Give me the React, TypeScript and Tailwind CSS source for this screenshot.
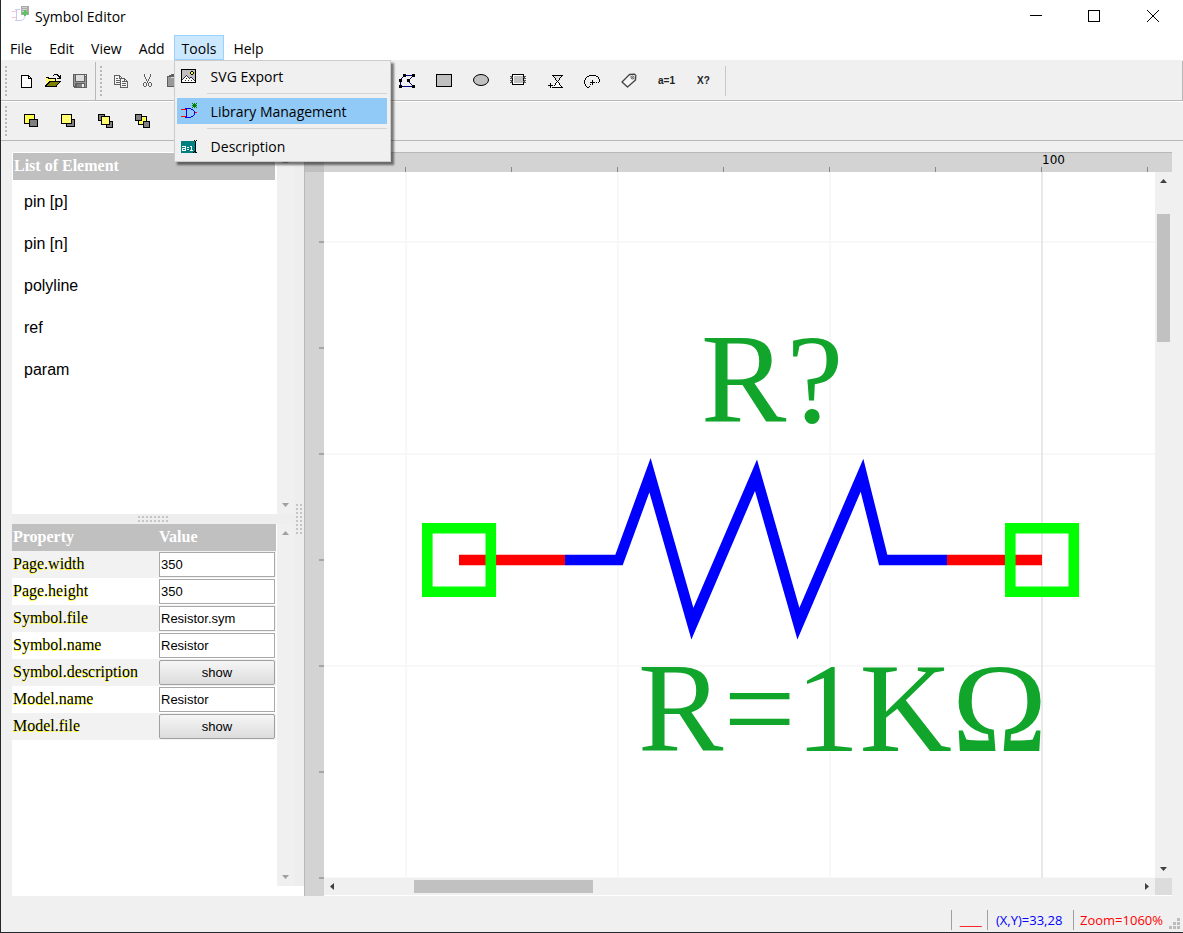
import { useState } from "react";
import type { ReactNode } from "react";
import clsx from "clsx";

const menus = ["File", "Edit", "View", "Add", "Tools", "Help"];
const elements = ["pin [p]", "pin [n]", "polyline", "ref", "param"];

const properties = [
  { name: "Page.width", value: "350" },
  { name: "Page.height", value: "350" },
  { name: "Symbol.file", value: "Resistor.sym" },
  { name: "Symbol.name", value: "Resistor" },
  { name: "Symbol.description", action: "show" },
  { name: "Model.name", value: "Resistor" },
  { name: "Model.file", action: "show" },
];

function Icon({ children, smooth }: { children: ReactNode; smooth?: boolean }) {
  return (
    <svg
      width="16"
      height="16"
      viewBox="0 0 16 16"
      fill="none"
      className="shrink-0"
      shapeRendering={smooth ? "auto" : "crispEdges"}
      aria-hidden="true"
    >
      {children}
    </svg>
  );
}

// filled box with a one pixel black outline
function Box({ x, y, w, h, fill }: { x: number; y: number; w: number; h: number; fill: string }) {
  return (
    <>
      <rect x={x} y={y} width={w} height={h} fill="#000" />
      <rect x={x + 1} y={y + 1} width={w - 2} height={h - 2} fill={fill} />
    </>
  );
}

const NewIcon = () => (
  <Icon>
    <path d="M3 2h8v1h1v1h1v1h1v10H3z" fill="#000" />
    <path d="M4 3h6v3h3v8H4z" fill="#fff" />
    <path d="M11 4h1v1h-1z" fill="#fff" />
  </Icon>
);

const OpenIcon = () => (
  <Icon>
    <path d="M1 4h3v1h7v3h-1v6H1z" fill="#000" />
    <path d="M1 5h2v1h7v2H5v1H4v1H3v1H2v1H1z" fill="#ffff70" />
    <path d="M4 8h12v1h-1v1h-1v1h-1v1h-1v2H0v-2h1v-1h1v-1h1V9h1z" fill="#000" />
    <path d="M5 9h9v1h-1v1h-1v1h-1v1H2v-1h1v-1h1v-1h1z" fill="#808000" />
    <path d="M8 2h1V1h4v1h1v1h1V2h1v4h-4V5h2V4h-1V3h-1V2H9v1H8z" fill="#000" />
  </Icon>
);

const SaveIcon = () => (
  <Icon>
    <path d="M1 1h14v14H2v-1H1z" fill="#606060" />
    <path d="M2 2h1v11H2zM13 4h1v10h-1zM3 9h10v1H3z" fill="#999" />
    <path d="M4 2h8v6H4z" fill="#dedede" />
    <path d="M13 2h1v1h-1z" fill="#eee" />
    <path d="M5 11h7v3H5z" fill="#808080" />
    <path d="M10 11h2v3h-2z" fill="#f0f0f0" />
  </Icon>
);

const CopyIcon = () => (
  <Icon>
    <path d="M1.500 2.500h5l3 3v6h-8z" fill="#f4f4f4" stroke="#606060" />
    <path d="M6.500 3v3M3 5.500h2M3 7.500h4M3 9.500h4" stroke="#606060" />
    <path d="M7.500 5.500h4l3 3v6h-7z" fill="#f4f4f4" stroke="#606060" />
    <path d="M11.500 6v2.500h3M9 8.500h2M9 10.500h4M9 12.500h4" stroke="#606060" />
  </Icon>
);

const CutIcon = () => (
  <Icon>
    <path d="M4 1h1v3h1v2h1v2h1v2H7V8H6V6H5V4H4zM10 1h1v3h-1v2H9v2H8v2H7V8h1V6h1V4h1z" fill="#606060" />
    <path
      d="M4 9h2v1h1v3H6v1H4v-1H3v-3h1zM4 10v3h2v-3zM9 9h2v1h1v3h-1v1H9v-1H8v-3h1zM9 10v3h2v-3z"
      fill="#606060"
      fillRule="evenodd"
    />
  </Icon>
);

const PasteIcon = () => (
  <Icon>
    <path d="M0 3h2V2h2V1h3v1h2v1h3v11H0z" fill="#606060" />
    <path d="M1 4h10v9H1z" fill="#999" />
    <path d="M4 4h5v1H4z" fill="#ddd" />
  </Icon>
);

const PolylineIcon = () => (
  <svg width="17" height="16" viewBox="1 0 17 16" className="shrink-0" shapeRendering="crispEdges" aria-hidden="true">
    <path d="M2 6h1v7H2zM3 5h1v1H3zM4 4h1v1H4zM6 2h9v1H6zM2 13h13v1H2z" fill="#00007f" />
    <path d="M14 3h1v1h-1zM13 4h1v1h-1zM12 5h1v1h-1zM11 6h1v1h-1zM11 9h1v1h-1zM12 10h1v1h-1zM13 11h1v1h-1z" fill="#00007f" />
    <path d="M1 12h3v3H1zM1 6h3v3H1zM5 1h3v3H5zM14 1h3v3h-3zM9 6h3v3H9zM14 12h3v3h-3z" fill="#000" />
  </svg>
);

const RectIcon = () => (
  <Icon>
    <Box x={0} y={1} w={16} h={13} fill="#c0c0c0" />
  </Icon>
);

const EllipseIcon = () => (
  <Icon smooth>
    <ellipse cx="8" cy="7" rx="7.500" ry="5.500" fill="#c0c0c0" stroke="#000" />
  </Icon>
);

const ChipIcon = () => (
  <Icon>
    <path d="M2 1h12v11H2z" fill="#000" />
    <path d="M3 2h10v9H3z" fill="#fff" />
    <path d="M4 3h9v7H4z" fill="#c0c0c0" />
    <path d="M2 4h1v1H2zM2 8h1v1H2zM13 4h1v1h-1zM13 8h1v1h-1z" fill="#f0f0f0" />
    <path
      d="M0 3h2v1h1v1H2v1H0V5h1V4H0zM0 7h2v1h1v1H2v1H0V9h1V8H0zM16 3h-2v1h-1v1h1v1h2V5h-1V4h1zM16 7h-2v1h-1v1h1v1h2V9h-1V8h1z"
      fill="#555"
    />
  </Icon>
);

const HourglassIcon = () => (
  <Icon>
    <path d="M6 3h8v1h-1v1h-1v1h-1v1H9V6H8V5H7V4H6z" fill="#e0e0e0" />
    <path d="M10 9h1v1h1v2h1v1h1v1H6v-1h1v-1h1v-2h1z" fill="#fff" />
    <path
      d="M5 2h11v1H5zM6 3h1v1H6zM14 3h1v1h-1zM7 4h1v1H7zM13 4h1v1h-1zM8 5h1v2H8zM12 5h1v2h-1zM9 7h1v1H9zM11 7h1v1h-1zM10 8h1v1h-1zM9 9h1v1H9zM11 9h1v1h-1zM8 10h1v2H8zM12 10h1v2h-1zM7 12h1v1H7zM13 12h1v1h-1zM14 13h1v1h-1zM5 14h11v1H5z"
      fill="#000"
    />
    <path d="M1 12h5v1H1zM3 10h1v5H3z" fill="#000" />
  </Icon>
);

const ArcIcon = () => (
  <Icon>
    <path
      d="M5 2h7v1H5zM3 3h2v1H3zM12 3h2v1h-2zM2 4h1v1H2zM14 4h1v2h-1zM1 5h1v2H1zM0 7h1v4H0zM15 6h1v3h-1zM1 11h1v2H1zM2 13h1v1H2zM3 14h2v1H3z"
      fill="#000"
    />
    <path d="M6 9h5v1H6zM8 7h1v5H8zM12 9h1v1h-1zM14 9h1v1h-1zM6 11h1v1H6zM5 13h1v1H5z" fill="#000" />
  </Icon>
);

const TagIcon = () => (
  <Icon smooth>
    <path d="M1 9 8.500 1.500l5-.3 1.300 1.300-.3 4.500L6.500 14z" fill="#f6f6f6" stroke="#444" strokeWidth="1.300" strokeLinejoin="round" />
    <circle cx="11.500" cy="4.500" r="1.500" stroke="#555" />
    <path d="M9.500 3l4 3" stroke="#777" />
  </Icon>
);

const FrontIcon = () => (
  <Icon>
    <Box x={1} y={1} w={11} h={10} fill="#ffff50" />
    <Box x={6} y={6} w={9} h={8} fill="#808080" />
  </Icon>
);

const BackIcon = () => (
  <Icon>
    <Box x={6} y={6} w={9} h={8} fill="#808080" />
    <Box x={1} y={1} w={11} h={10} fill="#ffff70" />
  </Icon>
);

const ForwardIcon = () => (
  <Icon>
    <Box x={1} y={1} w={7} h={7} fill="#808080" />
    <Box x={9} y={8} w={7} h={7} fill="#808080" />
    <Box x={4} y={3} w={9} h={9} fill="#ffff70" />
  </Icon>
);

const BackwardIcon = () => (
  <Icon>
    <Box x={4} y={3} w={9} h={9} fill="#ffff50" />
    <Box x={1} y={1} w={7} h={7} fill="#808080" />
    <Box x={9} y={8} w={7} h={7} fill="#808080" />
  </Icon>
);

const PictureIcon = () => (
  <Icon>
    <Box x={0} y={1} w={15} h={14} fill="#c0c0c0" />
    <path d="M10 3h2v1h1v2h-1v1h-2V6H9V4h1z" fill="#000" />
    <path d="M10 4h2v2h-2z" fill="#ff0" />
    <path d="M1 12h1v-1h1v-1h1V9h1V8h1v1h1v1h1v1h1v-1h2v1h1v1h2v2H1z" fill="#fff" />
    <path
      d="M5 7h1v1H5zM4 8h1v1H4zM6 8h1v1H6zM3 9h1v1H3zM7 9h1v1H7zM2 10h1v1H2zM8 10h1v1H8zM1 11h1v1H1zM9 9h2v1H9zM11 10h1v1h-1zM12 11h1v1h-1zM13 12h1v1h-1zM5 10h1v1H5zM4 12h1v1H4zM7 12h1v1H7zM10 12h1v1h-1z"
      fill="#333"
    />
  </Icon>
);

const GateIcon = () => (
  <Icon>
    <path d="M0 6h5v1H0zM0 13h5v1H0zM13 9h3v1h-3z" fill="#f00" />
    <path d="M4 5h6v1h2v1h1v1h1v4h-1v1h-1v1h-2v1H4v-1h1V6H4zM6 6v8h4v-1h2v-1h1V8h-1V7h-2V6z" fill="#00f" fillRule="evenodd" />
    <path d="M11 0h1v1h1V0h1v1h1V0h1v1h-1v1h1v1h-1v1h1v1h-1V4h-1v1h-1V4h-1v1h-1V4h1V3h-1V2h1V1h-1z" fill="#008000" />
  </Icon>
);

const DescriptionIcon = () => (
  <Icon>
    <path d="M0 3h14v12H0z" fill="#008080" />
    <path d="M1 8h4v5H1v-3h3V9H1zM2 11v1h2v-1zM6 9h2v1H6zM6 11h2v1H6zM9 8h2v4h1v1H9v-1h1V9H9z" fill="#fff" fillRule="evenodd" />
    <path d="M12 2h1v1h1v10h-1v1h-1v1h1v-1h1v1h2v-1h-1V3h1V2h-1v1h-1V2z" fill="#000" />
  </Icon>
);

const AppIcon = () => (
  <svg width="18" height="18" viewBox="0 0 18 18" fill="none" className="shrink-0" aria-hidden="true">
    <path d="M1 5.500h4M1 11.500h4" stroke="#f8c4c4" />
    <path d="M4 3.500h5M4 14.500h5c3 0 5-2 5-5M5.500 4v10" stroke="#c8c8f4" />
    <path d="M10 0h8v9h-8z" fill="#a9aaa9" />
    <path d="M11 1.500h5M11 3.500h5M11 5.500h2" stroke="#d0d0d0" />
    <path d="M13 4h2v2h2v2h-2v2h-2V8h-2V6h2z" fill="#5cc45c" />
  </svg>
);

function Tool({ label, wide, children }: { label: string; wide?: boolean; children: ReactNode }) {
  return (
    <button
      type="button"
      aria-label={label}
      className={clsx("flex h-7 shrink-0 items-center hover:bg-[#cce8ff]", wide ? "w-[37px] pl-[10px]" : "w-[27px] pl-[5px]")}
    >
      {children}
    </button>
  );
}

function Handle() {
  return (
    <div className="ml-1 flex shrink-0 flex-col gap-[2px]">
      {Array.from({ length: 8 }, (_, i) => (
        <span key={i} className="size-[2px] bg-[#b8b8b8]" />
      ))}
    </div>
  );
}

function Arrow({ dir, dim }: { dir: "up" | "down" | "left" | "right"; dim?: boolean }) {
  const paths = {
    up: "M1 6h7L4.500 2z",
    down: "M1 3h7L4.500 7z",
    left: "M6 1v7L2 4.500z",
    right: "M3 1v7l4-3.500z",
  };
  return (
    <svg width="9" height="9" viewBox="0 0 9 9" className="shrink-0" aria-hidden="true">
      <path d={paths[dir]} fill={dim ? "#a0a0a0" : "#404040"} />
    </svg>
  );
}

function Grip({ vertical }: { vertical?: boolean }) {
  return (
    <div className={clsx("grid gap-[2px]", vertical ? "grid-cols-2" : "grid-cols-8")}>
      {Array.from({ length: 16 }, (_, i) => (
        <span key={i} className="size-[2px] bg-[#c4c4c4]" />
      ))}
    </div>
  );
}

function PaneScrollbar() {
  return (
    <div className="flex w-[17px] shrink-0 flex-col items-center justify-between bg-[#f0f0f0] py-[5px]">
      <Arrow dir="up" dim />
      <Arrow dir="down" dim />
    </div>
  );
}

function ToolsMenu() {
  const items = [
    { label: "SVG Export", icon: <PictureIcon /> },
    { label: "Library Management", icon: <GateIcon />, active: true },
    { label: "Description", icon: <DescriptionIcon /> },
  ];
  return (
    <div
      role="menu"
      className="absolute top-full left-0 z-10 w-[217px] border border-[#ccc] bg-[#f0f0f0] py-[2px] pr-[3px] pl-[2px] shadow-[3px_3px_2px_rgba(0,0,0,0.5)]"
    >
      {items.map((item, i) => (
        <div key={item.label}>
          {i > 0 && <div className="my-1 ml-[30px] h-px bg-[#d4d4d4]" />}
          <button
            type="button"
            role="menuitem"
            className={clsx("flex h-[26px] w-full items-center gap-[14px] pl-1 text-left", item.active && "bg-[#91c9f7]")}
          >
            {item.icon}
            <span className="pt-[2px]">{item.label}</span>
          </button>
        </div>
      ))}
    </div>
  );
}

function ElementList() {
  return (
    <section className="flex h-[362px] shrink-0">
      <div className="min-w-0 flex-1 bg-white">
        <h2 className="mt-px mr-[2px] ml-px h-[27px] bg-[#c0c0c0] pl-px font-['Liberation_Serif',serif] text-base leading-[26px] font-bold text-white">
          List of Element
        </h2>
        <ul className="pt-px font-['Liberation_Sans',sans-serif] text-base">
          {elements.map((el) => (
            <li key={el}>
              <button type="button" className="h-[42px] w-full pl-3 text-left">
                {el}
              </button>
            </li>
          ))}
        </ul>
      </div>
      <PaneScrollbar />
    </section>
  );
}

function PropertyTable() {
  return (
    <section className="flex min-h-0 flex-1">
      <div className="min-w-0 flex-1 overflow-hidden bg-white pr-px">
        <table className="w-full table-fixed border-collapse font-['Liberation_Serif',serif] text-base">
          <thead>
            <tr className="h-[27px] bg-[#c0c0c0] text-left text-white">
              <th className="w-[147px] p-0 pb-px pl-px leading-6">Property</th>
              <th className="p-0 pb-px leading-6">Value</th>
            </tr>
          </thead>
          <tbody>
            {properties.map((prop) => (
              <tr key={prop.name} className="h-[27px] odd:bg-[#f2f2f2]">
                <td className="p-0 pb-px pl-px leading-6 [text-shadow:0_1px_0_#ff0]">
                  <label htmlFor={prop.name}>{prop.name}</label>
                </td>
                <td className="py-px pr-px pl-0">
                  {prop.action ? (
                    <button
                      id={prop.name}
                      type="button"
                      className="block h-[25px] w-full rounded-[2px] border border-[#a0a0a0] bg-linear-to-b from-[#f6f6f6] to-[#dcdcdc] font-['Liberation_Sans',sans-serif] text-[13px]"
                    >
                      {prop.action}
                    </button>
                  ) : (
                    <input
                      id={prop.name}
                      type="text"
                      defaultValue={prop.value}
                      className="block h-[25px] w-full border border-[#a9a9a9] bg-white px-px font-['Liberation_Sans',sans-serif] text-[13px]"
                    />
                  )}
                </td>
              </tr>
            ))}
          </tbody>
        </table>
      </div>
      <PaneScrollbar />
    </section>
  );
}

function Drawing() {
  return (
    <svg className="block h-full w-full bg-white" role="img" aria-label="Resistor symbol">
      <g stroke="#f8f8f8" strokeWidth="2">
        {[82, 294, 506].map((x) => (
          <line key={x} x1={x} x2={x} y1="0" y2="100%" />
        ))}
        {[70, 282, 494, 706].map((y) => (
          <line key={y} x1="0" x2="100%" y1={y} y2={y} />
        ))}
        <line x1="718" x2="718" y1="0" y2="100%" stroke="#e8e8e8" />
      </g>
      <g fill="none" strokeWidth="10.6">
        <path
          d="M241 388h54l31-84.800 42.400 148.400L432 303.200l42.400 148.400L538 303.200l21.200 84.800H623"
          stroke="#00f"
          strokeMiterlimit="10"
        />
        <path d="M135 388h106M623 388h95" stroke="#f00" />
        <path d="M103.300 356.200h63.500v63.500h-63.500zM686.300 356.200h63.500v63.500h-63.500z" stroke="#0f0" />
      </g>
      <g fill="#11a52b" className="font-['Liberation_Serif',serif] text-[128px]">
        <text x="377" y="250">R?</text>
        <text x="314" y="579">R=1KΩ</text>
      </g>
    </svg>
  );
}

function Editor() {
  return (
    <div className="flex min-w-0 flex-1 border-l border-[#b8b8b8] bg-[#d3d3d3]">
      {/* left ruler */}
      <div className="flex w-[19px] shrink-0 flex-col items-end overflow-hidden">
        <div className="h-5 w-full shrink-0 bg-[#c0c0c0]" />
        <div className="h-[71px] w-[5px] shrink-0 border-b-2 border-[#a6a6a6]" />
        {Array.from({ length: 6 }, (_, i) => (
          <div key={i} className="h-[106px] w-[5px] shrink-0 border-b-2 border-[#a6a6a6]" />
        ))}
      </div>
      <div className="flex min-w-0 flex-1 flex-col">
        {/* top ruler */}
        <div className="flex h-5 shrink-0 items-end overflow-hidden border-t border-[#b8b8b8]">
          <div className="h-[5px] w-[82px] shrink-0 border-r border-[#888]" />
          {Array.from({ length: 8 }, (_, i) => (
            <div key={i} className="flex h-full w-[106px] shrink-0 flex-col justify-between">
              <span className="h-3 font-['DejaVu_Sans',sans-serif] text-xs leading-[14px]">{i === 6 ? "100" : ""}</span>
              <span className="h-[5px] border-r border-[#888]" />
            </div>
          ))}
        </div>
        <div className="flex min-h-0 flex-1">
          <div className="min-w-0 flex-1">
            <Drawing />
          </div>
          <div className="flex w-[17px] shrink-0 flex-col items-center bg-[#f0f0f0] py-[5px]">
            <Arrow dir="up" />
            <div className="mt-7 h-32 w-[13px] bg-[#c1c1c1]" />
            <div className="flex-1" />
            <Arrow dir="down" />
          </div>
        </div>
        <div className="flex h-[18px] shrink-0 border-b border-white bg-[#f0f0f0]">
          <div className="flex flex-1 items-center px-1">
            <Arrow dir="left" />
            <div className="ml-[77px] h-[13px] w-[179px] bg-[#c1c1c1]" />
            <div className="flex-1" />
            <Arrow dir="right" />
          </div>
          <div className="w-[17px] bg-[#dcdcdc]" />
        </div>
      </div>
    </div>
  );
}

export default function App() {
  const [open, setOpen] = useState("Tools");

  return (
    <div className="flex h-screen flex-col overflow-hidden border-b border-l border-[#22282b] bg-[#f0f0f0] font-['Open_Sans','Noto_Sans',sans-serif] text-sm text-black">
      <header className="flex h-[34px] shrink-0 items-center bg-white pl-[10px]">
        <div className="flex flex-1 items-center gap-[6px] pb-1">
          <AppIcon />
          <h1 className="pt-1">Symbol Editor</h1>
        </div>
        <button type="button" aria-label="Minimize" className="flex h-full w-[58px] items-center justify-center">
          <svg width="12" height="12" shapeRendering="crispEdges">
            <path d="M0 4h12v1H0z" />
          </svg>
        </button>
        <button type="button" aria-label="Maximize" className="flex h-full w-[58px] items-center justify-center pb-[2px]">
          <svg width="12" height="12" fill="none" stroke="#000" shapeRendering="crispEdges">
            <path d="M.5.500h11v11H.5z" />
          </svg>
        </button>
        <button type="button" aria-label="Close" className="flex h-full w-[60px] items-center justify-center pb-[2px]">
          <svg width="12" height="12" stroke="#000">
            <path d="M0 0l12 12M12 0L0 12" />
          </svg>
        </button>
      </header>

      <nav className="flex h-[27px] shrink-0 items-end gap-px border-b border-[#f0f0f0] bg-white pl-px">
        {menus.map((menu) => (
          <div key={menu} className="relative">
            <button
              type="button"
              onClick={() => setOpen(open === menu ? "" : menu)}
              className={clsx(
                "h-[25px] border px-[7px] pt-[2px]",
                open === menu ? "border-[#99d1ff] bg-[#cce8ff]" : "border-transparent"
              )}
            >
              {menu}
            </button>
            {menu === "Tools" && open === "Tools" && <ToolsMenu />}
          </div>
        ))}
      </nav>

      <div className="flex h-10 shrink-0 items-center border-r border-b border-[#b8b8b8] pt-px">
        <div className="flex h-full w-[95px] shrink-0 items-center border-r border-[#b8b8b8]">
          <Handle />
          <div className="ml-[6px] flex">
            <Tool label="New"><NewIcon /></Tool>
            <Tool label="Open"><OpenIcon /></Tool>
            <Tool label="Save"><SaveIcon /></Tool>
          </div>
        </div>
        <div className="flex w-[293px] shrink-0 items-center">
          <Handle />
          <div className="ml-[6px] flex">
            <Tool label="Copy"><CopyIcon /></Tool>
            <Tool label="Cut"><CutIcon /></Tool>
            <Tool label="Paste"><PasteIcon /></Tool>
          </div>
        </div>
        <div className="flex h-[30px] items-center border-r border-[#c8c8c8] pr-[3px]">
          <Tool label="Polyline" wide><PolylineIcon /></Tool>
          <Tool label="Rectangle" wide><RectIcon /></Tool>
          <Tool label="Ellipse" wide><EllipseIcon /></Tool>
          <Tool label="Chip" wide><ChipIcon /></Tool>
          <Tool label="Pie" wide><HourglassIcon /></Tool>
          <Tool label="Arc" wide><ArcIcon /></Tool>
          <Tool label="Label" wide><TagIcon /></Tool>
          <Tool label="Parameter" wide>
            <span className="font-['Liberation_Sans',sans-serif] text-[10px] font-bold text-[#222]">a=1</span>
          </Tool>
          <Tool label="Reference" wide>
            <span className="pl-[2px] font-['Liberation_Sans',sans-serif] text-[10px] font-bold text-[#222]">X?</span>
          </Tool>
        </div>
      </div>

      <div className="flex h-10 shrink-0 items-center border-t border-b border-t-white border-b-[#b8b8b8]">
        <Handle />
        <div className="ml-[6px] flex">
          <Tool label="Bring to front" wide><FrontIcon /></Tool>
          <Tool label="Send to back" wide><BackIcon /></Tool>
          <Tool label="Bring forward" wide><ForwardIcon /></Tool>
          <Tool label="Send backward" wide><BackwardIcon /></Tool>
        </div>
      </div>

      <main className="flex min-h-0 flex-1 px-[11px] pt-[11px]">
        <aside className="flex w-[292px] shrink-0 flex-col bg-white pb-[10px]">
          <div className="flex min-h-0 flex-1 bg-[#eee]">
            <div className="flex min-w-0 flex-1 flex-col">
              <ElementList />
              <div className="flex h-[10px] shrink-0 items-center justify-center">
                <Grip />
              </div>
              <PropertyTable />
            </div>
            <div className="flex w-[10px] shrink-0 items-center justify-center">
              <Grip vertical />
            </div>
          </div>
        </aside>
        <Editor />
      </main>

      <footer className="flex h-9 shrink-0 items-end justify-end pr-[2px] pb-[2px] text-[13px] leading-5">
        <span className="h-5 w-9 border-l border-[#a0a0a0] pl-2 font-['Liberation_Sans',sans-serif] text-[#f00]">___</span>
        <span className="h-5 w-[86px] border-l border-[#a0a0a0] pl-2 text-[#00f]">(X,Y)=33,28</span>
        <span className="h-5 w-24 border-l border-[#a0a0a0] pl-[6px] text-[#f00]">Zoom=1060%</span>
        <svg width="12" height="12" fill="#bcbcbc" aria-hidden="true">
          <path d="M8 0h3v3H8zM4 4h3v3H4zM8 4h3v3H8zM0 8h3v3H0zM4 8h3v3H4zM8 8h3v3H8z" />
        </svg>
      </footer>
    </div>
  );
}
